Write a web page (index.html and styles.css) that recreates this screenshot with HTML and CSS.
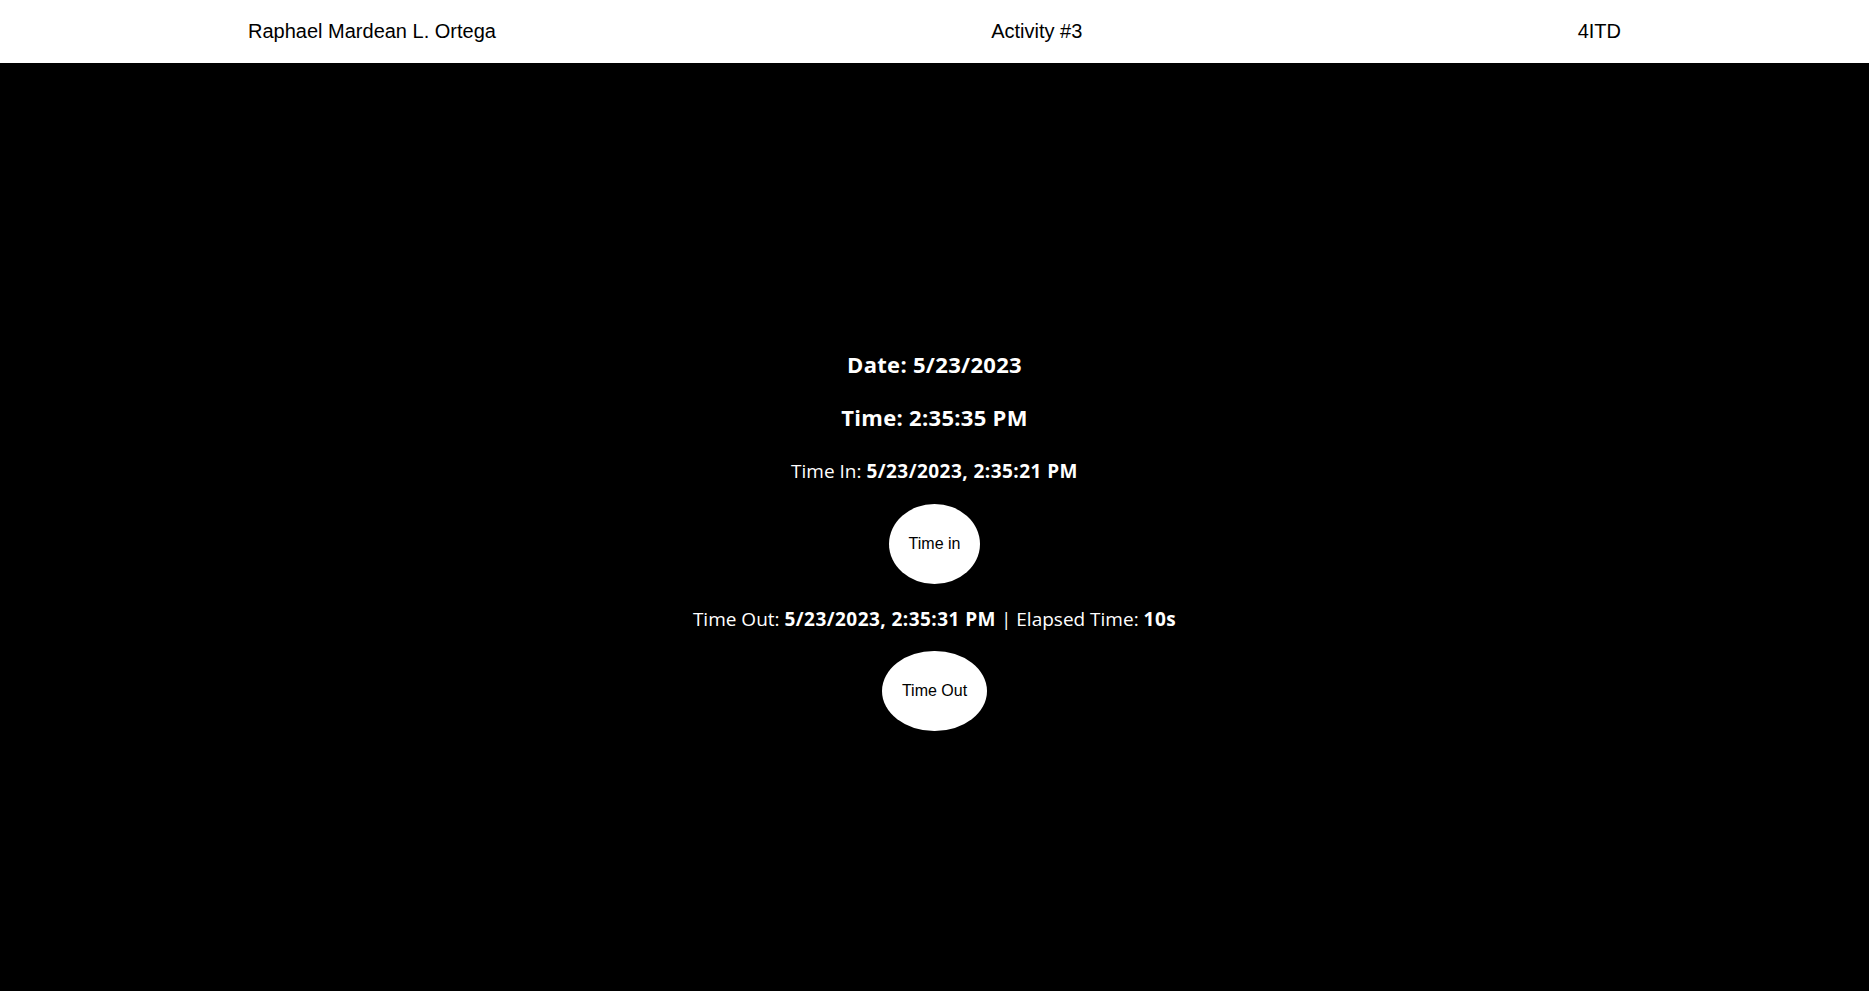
FILE: index.html
```html
<!DOCTYPE html>
<html>
<head>
<meta charset="utf-8">
<title>Activity #3</title>
<link rel="stylesheet" href="styles.css">
</head>
<body>
<header class="topbar">
  <span class="topbar-item">Raphael Mardean L. Ortega</span>
  <span class="topbar-item">Activity #3</span>
  <span class="topbar-item">4ITD</span>
</header>
<main class="stage">
  <h3 class="clock-line">Date: 5/23/2023</h3>
  <h3 class="clock-line clock-time">Time: 2:35:35 PM</h3>
  <p class="log-line log-in">Time In: <b>5/23/2023, 2:35:21 PM</b></p>
  <button class="round-btn btn-in">Time in</button>
  <p class="log-line log-out">Time Out: <b>5/23/2023, 2:35:31 PM</b> | Elapsed Time: <b>10s</b></p>
  <button class="round-btn btn-out">Time Out</button>
</main>
</body>
</html>
```
FILE: styles.css
```css
html, body {
  margin: 0;
  padding: 0;
  height: 100%;
}
body {
  background: #000;
  display: flex;
  flex-direction: column;
}
.topbar {
  height: 63px;
  flex: 0 0 63px;
  background: #fff;
  color: #000;
  display: flex;
  justify-content: space-between;
  align-items: center;
  padding: 0 248px;
  font-family: "Liberation Sans", Arial, sans-serif;
  font-size: 20px;
  line-height: 23px;
}
.stage {
  flex: 1;
  display: flex;
  flex-direction: column;
  align-items: center;
  padding-top: 289px;
  color: #fff;
  font-family: "Open Sans", "Noto Sans", sans-serif;
}
.clock-line {
  margin: 0;
  font-size: 22px;
  line-height: 24px;
  font-weight: 700;
  letter-spacing: 0.3px;
}
.clock-time {
  margin-top: 29px;
}
.log-line {
  margin: 0;
  font-size: 19px;
  line-height: 22px;
  font-weight: 400;
}
.log-line b {
  font-weight: 700;
  letter-spacing: 0.45px;
}
.log-in {
  margin-top: 31px;
}
.log-out {
  margin-top: 24px;
}
.round-btn {
  margin-top: 22px;
  background: #fff;
  color: #000;
  border: none;
  border-radius: 50%;
  font-family: "Liberation Sans", Arial, sans-serif;
  font-size: 16px;
  line-height: 18px;
  padding: 31px 19.5px;
}
.btn-out {
  margin-top: 21px;
}
```
